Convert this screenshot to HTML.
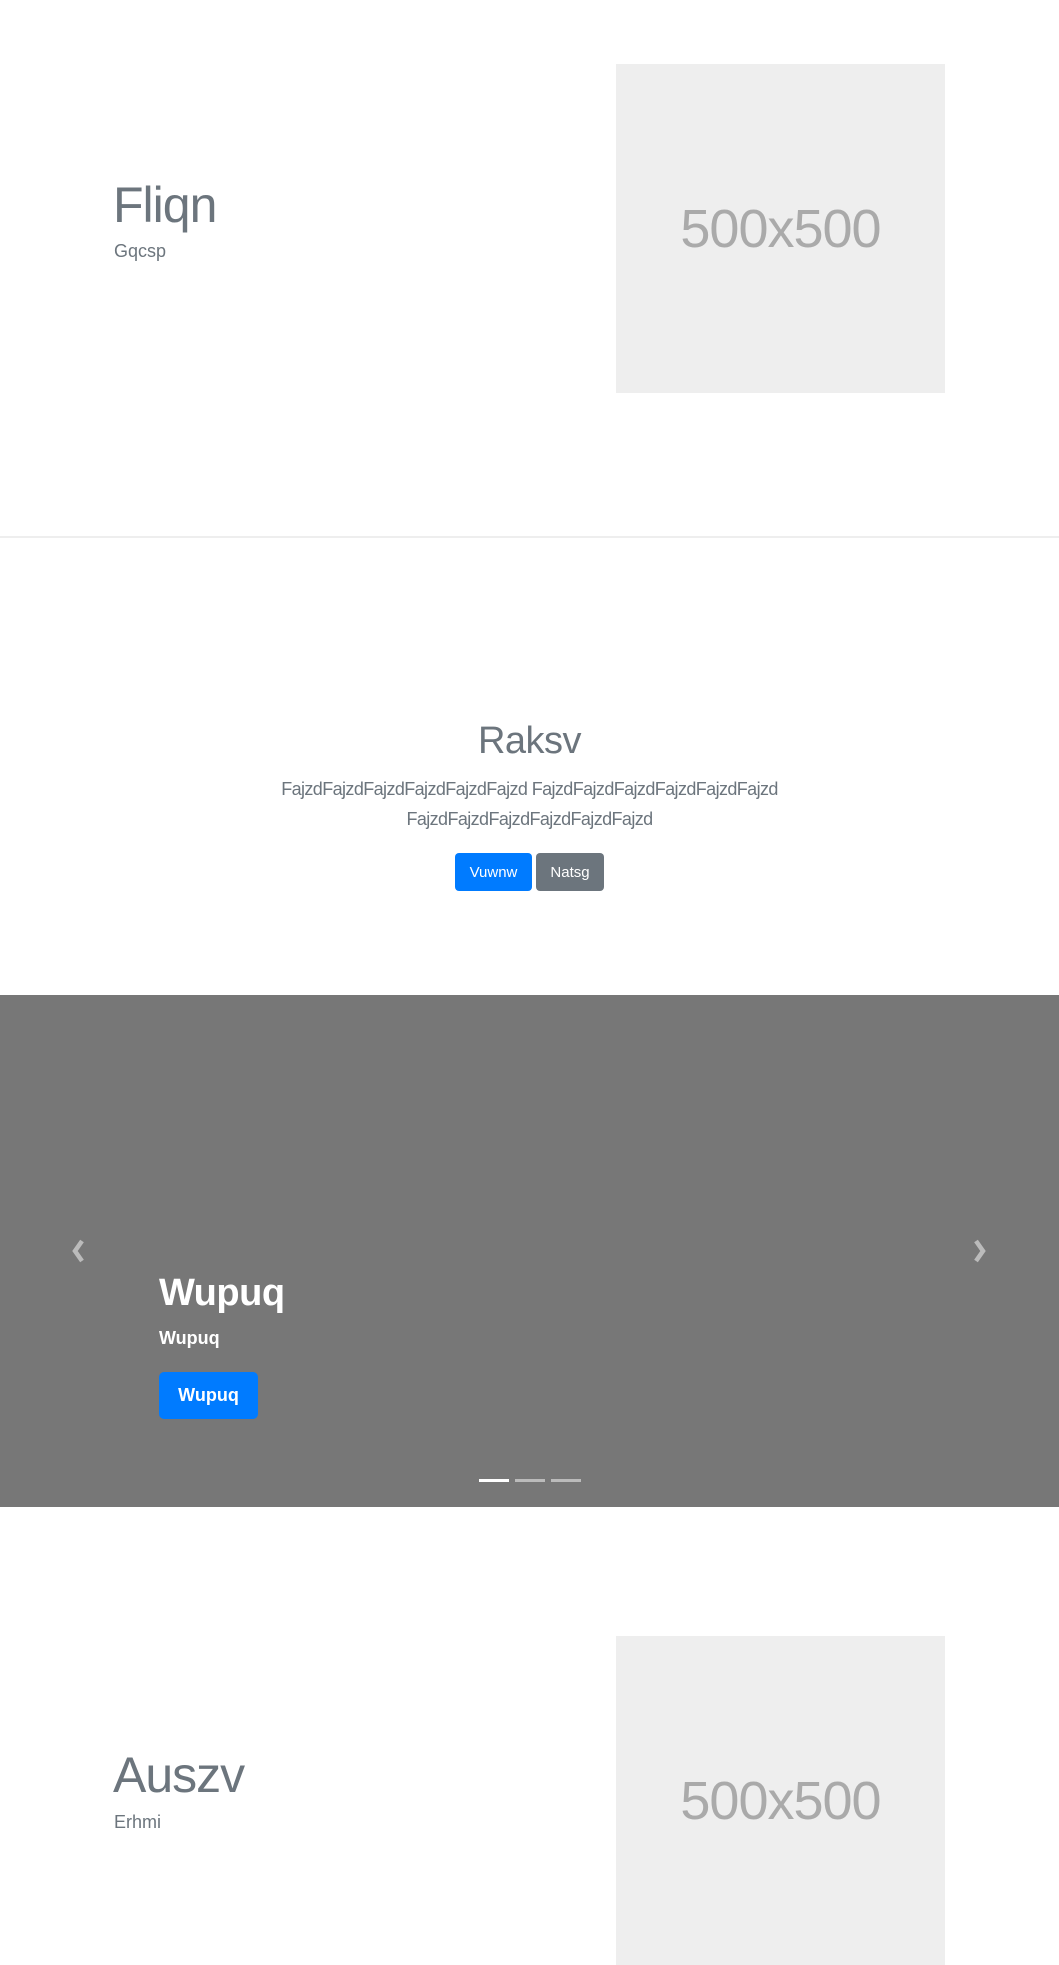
<!DOCTYPE html>
<html><head><meta charset="utf-8"><style>
*{margin:0;padding:0;box-sizing:border-box}
body{width:1059px;height:1920px;overflow:hidden;background:#fff;font-family:"Liberation Sans",sans-serif;position:relative}
.a{position:absolute;white-space:nowrap}
.ph{position:absolute;left:616px;width:329px;height:329px;background:#eee;color:#aaa;font-size:54px;display:flex;align-items:center;justify-content:center;letter-spacing:-1px}
.h{color:#6c757d;font-size:50px;line-height:1;letter-spacing:-1px}
.sub{color:#6c757d;font-size:18px;line-height:1}
.btn{position:absolute;color:#fff;border-radius:4px;display:flex;align-items:center;justify-content:center;font-size:15px}
</style></head><body>
<div class="a h" style="left:113px;top:180px">Fliqn</div>
<div class="a sub" style="left:114px;top:242px">Gqcsp</div>
<div class="ph" style="top:64px">500x500</div>
<div class="a" style="left:0;top:536px;width:1059px;height:2px;background:#eee"></div>

<div class="a" style="left:0;width:1059px;top:720px;text-align:center;color:#6c757d;font-size:38px;letter-spacing:-0.5px">Raksv</div>
<div class="a" style="left:0;width:1059px;top:774px;text-align:center;color:#6c757d;font-size:18px;line-height:30px;white-space:normal;letter-spacing:-0.6px">FajzdFajzdFajzdFajzdFajzdFajzd FajzdFajzdFajzdFajzdFajzdFajzd<br>FajzdFajzdFajzdFajzdFajzdFajzd</div>
<div class="btn" style="left:455px;top:853px;width:77px;height:38px;background:#007bff">Vuwnw</div>
<div class="btn" style="left:536px;top:853px;width:68px;height:38px;background:#6c757d">Natsg</div>

<div class="a" style="left:0;top:995px;width:1059px;height:512px;background:#777"></div>
<svg class="a" style="left:70px;top:1239px" width="18" height="24" viewBox="0 0 18 24"><path d="M12 2 L5 12 L12 22" stroke="#bbb" stroke-width="4.5" fill="none"/></svg>
<svg class="a" style="left:970px;top:1239px" width="18" height="24" viewBox="0 0 18 24"><path d="M6 2 L13 12 L6 22" stroke="#bbb" stroke-width="4.5" fill="none"/></svg>
<div class="a" style="left:159px;top:1272px;color:#fff;font-size:38px;font-weight:bold;letter-spacing:-0.5px">Wupuq</div>
<div class="a" style="left:159px;top:1328px;color:#fff;font-size:18px;font-weight:bold">Wupuq</div>
<div class="btn" style="left:159px;top:1372px;width:99px;height:47px;background:#007bff;font-size:18px;font-weight:bold;border-radius:5px">Wupuq</div>
<div class="a" style="left:479px;top:1479px;width:30px;height:3px;background:#fff"></div>
<div class="a" style="left:515px;top:1479px;width:30px;height:3px;background:#bbb"></div>
<div class="a" style="left:551px;top:1479px;width:30px;height:3px;background:#bbb"></div>

<div class="a h" style="left:113px;top:1750px">Auszv</div>
<div class="a sub" style="left:114px;top:1813px">Erhmi</div>
<div class="ph" style="top:1636px">500x500</div>
</body></html>
